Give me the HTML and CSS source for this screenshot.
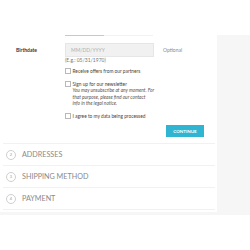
FILE: index.html
```html
<!DOCTYPE html>
<html>
<head>
<meta charset="utf-8">
<link rel="stylesheet" href="styles.css">
</head>
<body>
<div class="top"></div>
<div class="page">
  <div class="card">
    <div class="tabs"><span class="tab active"></span><span class="tab"></span></div>
    <div class="form-row">
      <label class="label">Birthdate</label>
      <div class="field">
        <div class="input">MM/DD/YYYY</div>
      </div>
      <span class="optional">Optional</span>
    </div>
    <div class="help">(E.g.: 05/31/1970)</div>
    <div class="check first"><span class="box"></span><span class="ctext">Receive offers from our partners</span></div>
    <div class="check"><span class="box"></span><span class="ctext">Sign up for our newsletter<br><em>You may unsubscribe at any moment. For<br>that purpose, please find our contact<br>info in the legal notice.</em></span></div>
    <div class="check"><span class="box"></span><span class="ctext">I agree to my data being processed</span></div>
    <div class="actions"><button class="btn">CONTINUE</button></div>
    <div class="steps">
      <div class="step"><span class="num">2</span><span class="title">ADDRESSES</span></div>
      <div class="step"><span class="num">3</span><span class="title">SHIPPING METHOD</span></div>
      <div class="step"><span class="num">4</span><span class="title">PAYMENT</span></div>
    </div>
  </div>
</div>
</body>
</html>
```
FILE: styles.css
```css
html, body { margin: 0; padding: 0; background: #fff; }
body { font-family: Lato, "Liberation Sans", sans-serif; color: #232323; }
.top { height: 35px; }
.page { background: #f6f6f6; padding-bottom: 3px; padding-right: 33px; }
.card { background: #fff; width: 217px; padding-bottom: 2px; }
.tabs { display: flex; height: 1px; padding-left: 65px; }
.tab { display: block; width: 49px; height: 1px; background: #f2f2f2; }
.tab.active { width: 39px; background: #9fd6ef; }
.form-row { display: flex; align-items: center; margin-top: 7px; height: 14px; }
.label { width: 49px; padding-left: 16px; font-size: 5px; font-weight: 700; color: #333; }
.field { width: 89px; }
.input { box-sizing: border-box; height: 14px; background: #f1f1f1; border: 1px solid #e6e6e6; font-size: 5px; color: #b0b0b0; padding-left: 5px; line-height: 12px; }
.optional { margin-left: 9px; font-size: 5px; color: #8a8a8a; margin-top: -1px; }
.help { margin-left: 65px; font-size: 5px; line-height: 6px; color: #777; }
.check { display: flex; align-items: flex-start; margin-left: 65px; margin-top: 7px; font-size: 4.8px; line-height: 6.2px; color: #444; }
.check.first { margin-top: 5px; }
.box { box-sizing: border-box; width: 6px; height: 6px; border: 0.7px solid #b8b8b8; margin-right: 1.5px; flex: none; }
.ctext em { color: #555; }
.actions { display: flex; justify-content: flex-end; padding-right: 13px; margin-top: 6px; }
.btn { box-sizing: border-box; width: 38px; height: 12px; border: none; background: #2fb5d2; color: #fff; font-family: inherit; font-size: 4.5px; font-weight: 700; padding: 0; }
.steps { margin-top: 6px; padding: 0 2px 0 3px; }
.step { display: flex; align-items: center; height: 21px; border-top: 1px solid #f1f1f1; }
.step:last-child { border-bottom: 1px solid #f1f1f1; }
.num { box-sizing: border-box; width: 10px; height: 10px; border: 0.8px solid #cfcfcf; border-radius: 50%; margin-left: 3px; display: flex; align-items: center; justify-content: center; font-size: 4px; color: #999; }
.title { margin-left: 6px; font-size: 7.2px; color: #8a8a8a; }
```
